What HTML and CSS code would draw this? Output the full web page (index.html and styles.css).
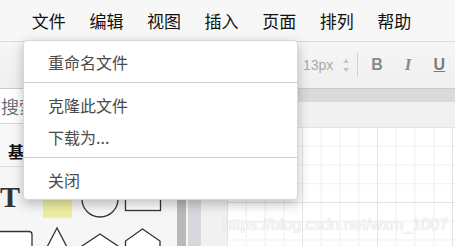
FILE: index.html
```
<!DOCTYPE html>
<html lang="zh-CN">
<head>
    <meta charset="UTF-8">
    <meta name="viewport" content="width=device-width, initial-scale=1.0">
    <title>绘图</title>
    <link rel="stylesheet" href="styles.css">
</head>
<body>
    <div class="app">
        <header class="menubar">
            <span class="menu-item">文件</span>
            <span class="menu-item">编辑</span>
            <span class="menu-item">视图</span>
            <span class="menu-item">插入</span>
            <span class="menu-item">页面</span>
            <span class="menu-item">排列</span>
            <span class="menu-item">帮助</span>
        </header>

        <div class="toolbar">
            <span class="tb-size">13px</span>
            <span class="spin"><i class="up"></i><i class="down"></i></span>
            <span class="tb-sep"></span>
            <span class="tb-btn bold">B</span>
            <span class="tb-btn italic">I</span>
            <span class="tb-btn under">U</span>
        </div>

        <div class="workspace">
            <aside class="sidebar">
                <div class="search">搜索</div>
                <div class="section-title">基本图形</div>
                <svg class="shapes" width="177" height="78" viewBox="0 0 177 78">
                    <text x="0" y="40" class="shape-text">T</text>
                    <rect x="43" y="14" width="29" height="37" fill="#eeeea2"/>
                    <circle cx="100" cy="32" r="18" fill="none" stroke="#333" stroke-width="1.3"/>
                    <rect x="125.5" y="12.5" width="35" height="31" fill="#fff" stroke="#333" stroke-width="1.3"/>
                    <rect x="-3" y="64.5" width="35" height="30" rx="3" fill="#fff" stroke="#333" stroke-width="1.3"/>
                    <polygon points="57,61 46,82 68,82" fill="#fff" stroke="#333" stroke-width="1.3"/>
                    <polygon points="100,67 82,79 100,91 118,79" fill="#fff" stroke="#333" stroke-width="1.3"/>
                    <polygon points="142.5,62 125.5,74 125.5,92 160,92 160,74" fill="#fff" stroke="#333" stroke-width="1.3"/>
                </svg>
            </aside>
            <div class="splitter"></div>
            <div class="vscroll"></div>
            <main class="diagram">
                <div class="strip"></div>
                <div class="ruler"></div>
                <div class="canvas">
                    <div class="canvas-margin"></div>
                    <div class="paper"></div>
                </div>
            </main>
        </div>

        <div class="dropdown">
            <div class="dd-item">重命名文件</div>
            <div class="dd-sep"></div>
            <div class="dd-item">克隆此文件</div>
            <div class="dd-item">下载为...</div>
            <div class="dd-sep"></div>
            <div class="dd-item">关闭</div>
        </div>

        <div class="watermark">https://blog.csdn.net/wxm_1007</div>
    </div>
</body>
</html>
```

FILE: styles.css
```
body {
    margin: 0;
    padding: 0;
    font-family: "Noto Sans CJK SC", "Liberation Sans", sans-serif;
    background: #f5f5f5;
    overflow: hidden;
}

.app {
    position: relative;
    width: 455px;
    height: 246px;
    overflow: hidden;
}

/* top menu */
.menubar {
    height: 41px;
    display: flex;
    align-items: center;
    padding-left: 20px;
    background: #f7f7f7;
    border-bottom: 1px solid #dcdcdc;
}

.menu-item {
    padding: 0 11.8px;
    font-size: 17px;
    color: #111;
}

/* format toolbar */
.toolbar {
    height: 46px;
    display: flex;
    align-items: center;
    background: linear-gradient(#f6f6f6, #efefef);
    border-bottom: 1px solid #cacaca;
}

.tb-size {
    margin-left: 303px;
    font-family: "Liberation Sans", Arial, sans-serif;
    font-size: 14px;
    color: #a9a9a9;
}

.spin {
    display: flex;
    flex-direction: column;
    gap: 5px;
    margin-left: 10px;
}

.spin i {
    width: 0;
    height: 0;
    border-left: 3.5px solid transparent;
    border-right: 3.5px solid transparent;
}

.spin .up {
    border-bottom: 4px solid #c4c4c4;
}

.spin .down {
    border-top: 4px solid #c4c4c4;
}

.tb-sep {
    width: 1px;
    height: 24px;
    margin-left: 8px;
    background: #d0d0d0;
}

.tb-btn {
    width: 32px;
    text-align: center;
    font-family: "Liberation Sans", Arial, sans-serif;
    font-size: 16px;
    color: #8a8a8a;
}

.tb-btn.bold {
    margin-left: 3px;
    font-weight: bold;
}

.tb-btn.italic {
    font-family: "Liberation Serif", serif;
    font-style: italic;
    font-weight: bold;
    font-size: 17px;
}

.tb-btn.under {
    font-weight: bold;
    color: #7c7c7c;
    text-decoration: underline;
}

/* main area */
.workspace {
    display: flex;
    height: 157px;
}

.sidebar {
    width: 177px;
    flex-shrink: 0;
    background: #f6f6f6;
}

.search {
    height: 34px;
    line-height: 34px;
    padding-left: 1px;
    font-size: 18px;
    color: #6a7080;
    background: #fff;
    border-bottom: 1px solid #d6d6d6;
}

.section-title {
    height: 43px;
    box-sizing: border-box;
    padding: 16px 0 0 8px;
    line-height: 23px;
    font-size: 16px;
    font-weight: bold;
    color: #111;
    background: #f8f8f8;
    border-bottom: 1px solid #dedede;
}

.shapes {
    display: block;
    overflow: visible;
}

.shape-text {
    font-family: "Liberation Serif", serif;
    font-weight: bold;
    font-size: 30px;
    fill: #333;
}

.splitter {
    width: 9px;
    margin-right: 2px;
    flex-shrink: 0;
    background: #b9b9b9;
}

.vscroll {
    width: 13px;
    flex-shrink: 0;
    background: #d6d8dd;
}

.diagram {
    flex: 1;
    display: flex;
    flex-direction: column;
}

.strip {
    height: 13px;
    background: #dadada;
}

.ruler {
    height: 25px;
    background: #f1f1f1;
}

.canvas {
    flex: 1;
    display: flex;
}

.canvas-margin {
    width: 26px;
    background: #f1f1f1;
}

.paper {
    flex: 1;
    background-color: #fff;
    background-image:
        linear-gradient(to right, #e3e3e3 1px, transparent 1px),
        linear-gradient(to bottom, #e3e3e3 1px, transparent 1px),
        linear-gradient(to right, #efefef 1px, transparent 1px),
        linear-gradient(to bottom, #efefef 1px, transparent 1px);
    background-size: 75px 75px, 75px 75px, 18.75px 18.75px, 18.75px 18.75px;
}

/* file menu popup */
.dropdown {
    position: absolute;
    left: 23px;
    top: 40px;
    width: 275px;
    height: 160px;
    box-sizing: border-box;
    padding: 5px 0 2px;
    background: #fff;
    border: 1px solid #d8d8d8;
    border-radius: 4px;
    box-shadow: 0 4px 12px rgba(0, 0, 0, 0.25);
}

.dd-item {
    height: 32px;
    line-height: 32px;
    padding-left: 24px;
    font-size: 16px;
    color: #4a4a4a;
}

.dd-sep {
    margin: 4px 0 6px;
    border-top: 1px solid #cdcdcd;
}

.watermark {
    position: absolute;
    left: 223px;
    top: 216px;
    font-family: "Liberation Sans", Arial, sans-serif;
    font-size: 16px;
    color: rgba(255, 255, 255, 0.9);
    text-shadow: 0 0 1px #bdbdbd;
}
```
